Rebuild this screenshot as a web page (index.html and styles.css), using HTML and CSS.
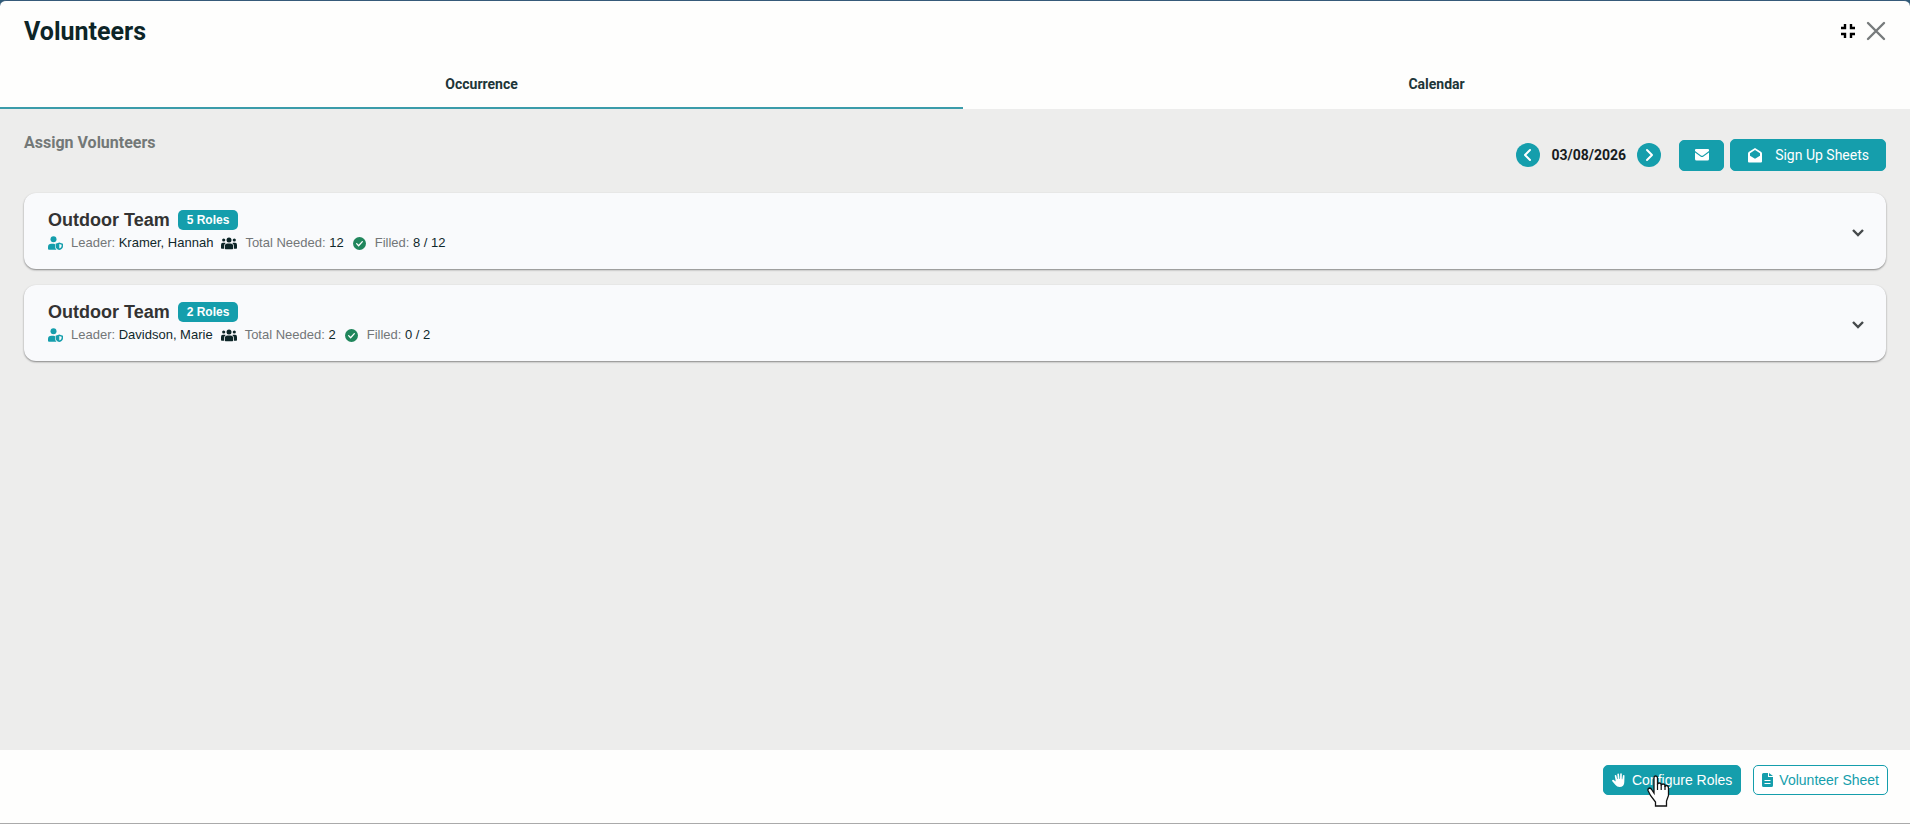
FILE: index.html
```html
<!DOCTYPE html>
<html lang="en">
<head>
<meta charset="utf-8">
<title>Volunteers</title>
<link rel="stylesheet" href="styles.css">
</head>
<body>
<svg class="sprite" aria-hidden="true">
  <symbol id="leader" viewBox="0 0 15 14"><circle cx="5.500" cy="3.200" r="3"/><path d="M7 8.200v2.300q0 2 1.500 3.200H1q-1 0-1-1V11q0-3.300 3.500-3.300h2q1 0 1.500.5z"/><path fill-rule="evenodd" d="m11.300 6.600 3.700 1.200v2.400q0 2.800-3.700 3.800-3.700-1-3.700-3.800V7.800zm0 1.500v4.500q2.300-.7 2.300-2.600V8.800z"/></symbol>
  <symbol id="people" viewBox="0 0 16 13"><circle cx="8" cy="3" r="2.500"/><circle cx="2.700" cy="3" r="1.600"/><circle cx="13.300" cy="3" r="1.600"/><path d="M6.500 6.500h3q2.700 0 2.700 3v2q0 .8-.8.8H4.600q-.8 0-.8-.8v-2q0-3 2.700-3zM1.800 5.800H4q.4 0 .7.300Q3 7.200 3 9.500v2.200H.7q-.7 0-.7-.7V8q0-2.200 1.800-2.200zm10.200 0h2.200Q16 5.800 16 8v3q0 .7-.7.700H13V9.500q0-2.300-1.700-3.400.3-.3.700-.3z"/></symbol>
  <symbol id="filled" viewBox="0 0 16 16"><circle cx="8" cy="8" r="8"/><path d="m4.500 8.200 2.400 2.500 4.600-5" fill="none" stroke="#fff" stroke-width="1.600" stroke-linecap="round" stroke-linejoin="round"/></symbol>
  <symbol id="chevron" viewBox="0 0 14 10"><path d="m2 2 5 5 5-5" fill="none" stroke="currentColor" stroke-width="2.400"/></symbol>
</svg>
<div class="dialog">
  <header class="header">
    <h1 class="title">Volunteers</h1>
    <div class="window-actions">
      <button class="plain" type="button" aria-label="Exit full screen"><svg width="14" height="14" viewBox="0 0 14 14" fill="none" stroke="#000" stroke-width="2.400"><path d="M0 4h4V0M10 0v4h4M0 10h4v4M14 10h-4v4"/></svg></button>
      <button class="plain" type="button" aria-label="Close"><svg width="20" height="20" viewBox="0 0 20 20" fill="none" stroke="#777b7c" stroke-width="2.400" stroke-linecap="round"><path d="m2 2 16 16M18 2 2 18"/></svg></button>
    </div>
  </header>
  <nav class="tabs" role="tablist">
    <button class="tab active" type="button" role="tab" aria-selected="true">Occurrence</button>
    <button class="tab" type="button" role="tab" aria-selected="false">Calendar</button>
  </nav>
  <main class="content">
    <div class="toolbar">
      <h2 class="subtitle">Assign Volunteers</h2>
      <div class="controls">
        <div class="date-nav">
          <button class="round" type="button" aria-label="Previous date"><svg width="10" height="14" viewBox="0 0 10 14"><path d="M7 2 2 7l5 5"/></svg></button>
          <span class="date">03/08/2026</span>
          <button class="round" type="button" aria-label="Next date"><svg width="10" height="14" viewBox="0 0 10 14"><path d="m3 2 5 5-5 5"/></svg></button>
        </div>
        <button class="btn mail" type="button" aria-label="Send email"><svg width="14" height="12" viewBox="0 0 14 12"><path d="M1 0h12q1 0 1 1v1L8 6.500q-1 .7-2 0L0 2V1q0-1 1-1zM0 3.600l5.500 4q1.500 1 3 0l5.500-4V10q0 1.500-1.500 1.500h-11Q0 11.500 0 10z"/></svg></button>
        <button class="btn signup" type="button"><svg width="14" height="15" viewBox="0 0 14 15"><path fill-rule="evenodd" d="m7 0 6.300 4q.7.500.7 1.500v8q0 1-1 1H1q-1 0-1-1v-8Q0 4.500.7 4zm0 2L2 5.200v2.600l5 3 5-3V5.200z"/></svg>Sign Up Sheets</button>
      </div>
    </div>
    <section class="card">
      <div>
        <div class="heading"><h3 class="team">Outdoor Team</h3><span class="badge">5 Roles</span></div>
        <div class="meta">
          <svg class="icon-leader" width="15" height="14"><use href="#leader"/></svg><span>Leader: <b>Kramer, Hannah</b></span>
          <svg class="icon-people" width="16" height="13"><use href="#people"/></svg><span>Total Needed: <b>12</b></span>
          <svg class="icon-filled" width="13" height="13"><use href="#filled"/></svg><span>Filled: <b>8 / 12</b></span>
        </div>
      </div>
      <button class="plain expand" type="button" aria-label="Expand team"><svg width="14" height="10"><use href="#chevron"/></svg></button>
    </section>
    <section class="card">
      <div>
        <div class="heading"><h3 class="team">Outdoor Team</h3><span class="badge">2 Roles</span></div>
        <div class="meta">
          <svg class="icon-leader" width="15" height="14"><use href="#leader"/></svg><span>Leader: <b>Davidson, Marie</b></span>
          <svg class="icon-people" width="16" height="13"><use href="#people"/></svg><span>Total Needed: <b>2</b></span>
          <svg class="icon-filled" width="13" height="13"><use href="#filled"/></svg><span>Filled: <b>0 / 2</b></span>
        </div>
      </div>
      <button class="plain expand" type="button" aria-label="Expand team"><svg width="14" height="10"><use href="#chevron"/></svg></button>
    </section>
  </main>
  <footer class="footer">
    <button class="btn action" type="button"><svg width="14" height="14" viewBox="0 0 14 14"><path d="M3.600 7.500 2.800 3a.8.800 0 0 1 1.600-.3L5.200 6h.5L5.400 1.200a.8.800 0 0 1 1.600 0L7.500 6H8l.2-5a.8.800 0 0 1 1.600.1L9.800 6.300h.5l.6-3.600a.8.800 0 0 1 1.600.2L12.300 9q0 5-4.800 5Q5 14 3.500 12L.3 8.300Q-.2 7.500.5 7q.7-.4 1.400.1l1.500 1.500z"/></svg>Configure Roles
      <svg class="pointer" width="24" height="32" viewBox="0 0 24 32"><path d="M7 18V3q0-2 1.700-2T10.500 3v6.500q0-1.500 1.800-1.500t1.900 2v.5q0-1.500 1.900-1.500t1.900 2v1q0-1.500 1.600-1.500T21.500 13v7.500L19.500 26v5h-11v-4L3.500 20.500 1 15.500q-.5-2 1.500-2.500 1.500 0 2.500 2z" fill="#fff" stroke="#111" stroke-width="1.300"/><path d="M10.500 9v6m3.700-5v5m3.800-4v4" stroke="#111" stroke-width="1.200"/></svg>
    </button>
    <button class="btn action outline" type="button"><svg width="11" height="14" viewBox="0 0 11 14"><path fill-rule="evenodd" d="M1.500 0H6v4h5v8.500q0 1.500-1.500 1.500h-8Q0 14 0 12.500v-11Q0 0 1.500 0zM7 0l4 3H7zM2.500 7v1h6V7zm0 3v1h6v-1z"/></svg>Volunteer Sheet</button>
  </footer>
</div>
</body>
</html>
```
FILE: styles.css
```css
* { box-sizing: border-box; }
body { margin: 0; background: #305b78; font-family: "Liberation Sans", Arial, sans-serif; color: #0d2527; }
h1, h2, h3 { margin: 0; }
button { font: inherit; cursor: pointer; }
svg { display: block; flex: none; }
.sprite { position: absolute; width: 0; height: 0; }
.dialog { display: flex; flex-direction: column; min-height: 100vh; background: #fefefd; border-top: 1px solid #365a79; border-bottom: 1px solid #aaa; border-radius: 6px 6px 0 0; }
.header { display: flex; align-items: center; justify-content: space-between; height: 60px; padding: 0 24px; }
.title { padding-top: 2px; font: 700 25px/32px Roboto, sans-serif; }
.window-actions { display: flex; align-items: center; gap: 11px; }
.plain { display: flex; padding: 0; border: 0; background: none; }
.tabs { display: flex; }
.tab { flex: 1 1 auto; height: 48px; padding: 0 16px; border: 0; border-bottom: 2px solid transparent; background: none; font: 700 14px/20px Roboto, sans-serif; color: #203538; }
.tab.active { border-bottom-color: #3b9caa; }
.content { flex: 1; display: flex; flex-direction: column; gap: 16px; padding: 24px; background: #ededec; }
.toolbar { display: flex; justify-content: space-between; min-height: 44px; }
.subtitle { font: 700 16px/20px Roboto, sans-serif; color: #737877; }
.controls { display: flex; align-items: center; align-self: flex-start; gap: 6px; padding-top: 6px; }
.date-nav { display: flex; align-items: center; gap: 11px; margin-right: 12px; }
.date { font: 700 14px/20px Roboto, sans-serif; color: #171b1d; }
.round { display: grid; place-items: center; width: 24px; height: 24px; padding: 0; border: 0; border-radius: 50%; background: #159eac; }
.round path { fill: none; stroke: #fff; stroke-width: 2; stroke-linecap: round; stroke-linejoin: round; }
.btn { display: flex; align-items: center; justify-content: center; border: 1px solid #159eac; border-radius: 5px; background: #159eac; color: #fff; fill: currentColor; }
.mail { width: 45px; height: 31px; padding: 0; }
.signup { height: 32px; gap: 13px; padding: 0 16px 0 17px; font: 400 14px/20px Roboto, sans-serif; }
.card { display: flex; align-items: center; justify-content: space-between; min-height: 76px; padding: 15px 21px 15px 24px; border-radius: 12px; background: #f9fafc; box-shadow: 0 1px 2px rgba(0, 0, 0, .45); }
.heading { display: flex; align-items: center; gap: 8px; height: 24px; }
.team { font-size: 18px; line-height: 24px; color: #333; }
.badge { padding: 0 9px; border-radius: 5px; background: #159eac; color: #fff; font-size: 12px; font-weight: 700; line-height: 20px; }
.meta { display: flex; align-items: center; gap: 8px; height: 22px; font-size: 13px; line-height: 20px; color: #737678; }
.meta b { font-weight: 400; color: #10282b; }
.icon-leader { fill: #159eac; }
.icon-people { fill: #0d2527; }
.icon-filled { margin: 0 1px; fill: #20865c; }
.expand { padding-top: 3px; color: #464a4c; }
.footer { display: flex; justify-content: flex-end; gap: 12px; height: 73px; padding: 15px 22px; }
.action { position: relative; height: 30px; gap: 6px; padding: 0 8px; font-size: 14px; }
.outline { background: #fff; color: #159eac; }
.pointer { position: absolute; left: 43px; top: 9px; }
```
